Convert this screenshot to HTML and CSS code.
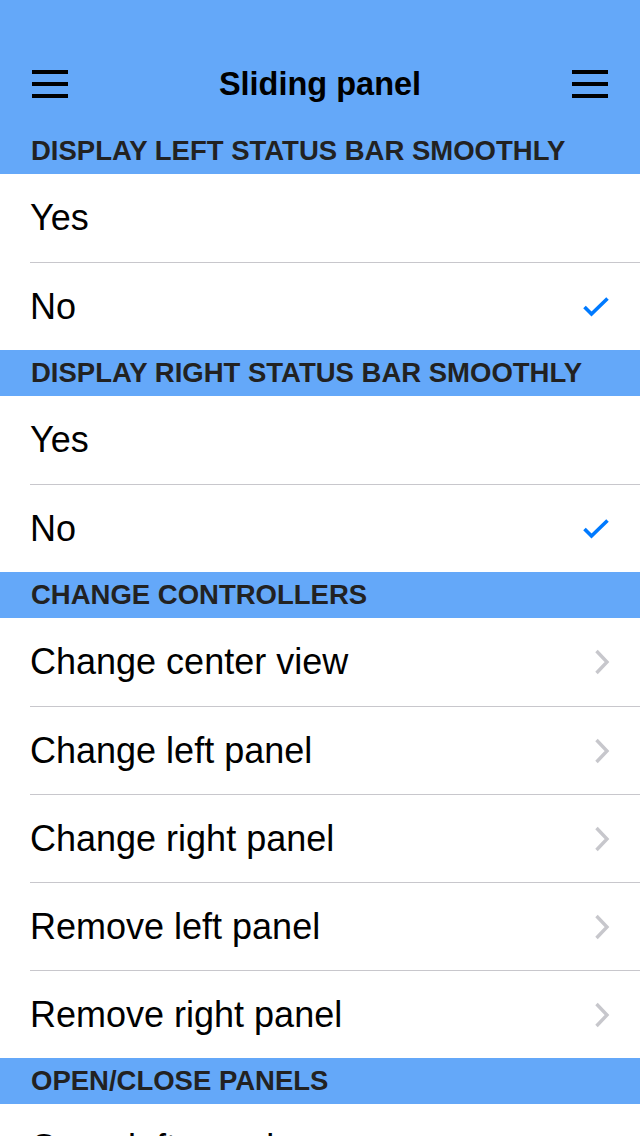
FILE: index.html
```html
<!DOCTYPE html>
<html>
<head>
<meta charset="utf-8">
<link rel="stylesheet" href="styles.css">
</head>
<body>
<div class="app">
  <header class="topbar">
    <div class="status"></div>
    <nav class="nav">
      <span class="burger"><i></i><i></i><i></i></span>
      <h1 class="title">Sliding panel</h1>
      <span class="burger"><i></i><i></i><i></i></span>
    </nav>
  </header>

  <div class="section">DISPLAY LEFT STATUS BAR SMOOTHLY</div>
  <ul class="list">
    <li class="row"><span class="label">Yes</span></li>
    <li class="row"><span class="label">No</span>
      <svg class="check" width="28" height="22" viewBox="0 0 28 22"><path d="M2.5 11 L9.5 18 L25.5 2.5" fill="none" stroke="#007aff" stroke-width="3.6" stroke-linecap="butt" stroke-linejoin="miter"/></svg>
    </li>
  </ul>

  <div class="section">DISPLAY RIGHT STATUS BAR SMOOTHLY</div>
  <ul class="list">
    <li class="row"><span class="label">Yes</span></li>
    <li class="row"><span class="label">No</span>
      <svg class="check" width="28" height="22" viewBox="0 0 28 22"><path d="M2.5 11 L9.5 18 L25.5 2.5" fill="none" stroke="#007aff" stroke-width="3.6" stroke-linecap="butt" stroke-linejoin="miter"/></svg>
    </li>
  </ul>

  <div class="section">CHANGE CONTROLLERS</div>
  <ul class="list">
    <li class="row"><span class="label">Change center view</span><svg class="chev" width="16" height="26" viewBox="0 0 16 26"><path d="M2.5 2 L13 13 L2.5 24" fill="none" stroke="#c7c7cc" stroke-width="3.4"/></svg></li>
    <li class="row"><span class="label">Change left panel</span><svg class="chev" width="16" height="26" viewBox="0 0 16 26"><path d="M2.5 2 L13 13 L2.5 24" fill="none" stroke="#c7c7cc" stroke-width="3.4"/></svg></li>
    <li class="row"><span class="label">Change right panel</span><svg class="chev" width="16" height="26" viewBox="0 0 16 26"><path d="M2.5 2 L13 13 L2.5 24" fill="none" stroke="#c7c7cc" stroke-width="3.4"/></svg></li>
    <li class="row"><span class="label">Remove left panel</span><svg class="chev" width="16" height="26" viewBox="0 0 16 26"><path d="M2.5 2 L13 13 L2.5 24" fill="none" stroke="#c7c7cc" stroke-width="3.4"/></svg></li>
    <li class="row"><span class="label">Remove right panel</span><svg class="chev" width="16" height="26" viewBox="0 0 16 26"><path d="M2.5 2 L13 13 L2.5 24" fill="none" stroke="#c7c7cc" stroke-width="3.4"/></svg></li>
  </ul>

  <div class="section">OPEN/CLOSE PANELS</div>
  <ul class="list">
    <li class="row"><span class="label">Open left panel</span></li>
  </ul>
</div>
</body>
</html>
```

FILE: styles.css
```css
* { box-sizing: border-box; }
html, body {
  margin: 0;
  padding: 0;
  background: #ffffff;
  font-family: "Liberation Sans", Arial, sans-serif;
  color: #000;
}
.app {
  width: 640px;
  height: 1136px;
  overflow: hidden;
}
.topbar {
  background: #64a8f9;
}
.status {
  height: 40px;
}
.nav {
  height: 88px;
  display: flex;
  align-items: center;
  justify-content: space-between;
  padding: 0 32px;
}
.title {
  margin: 0;
  font-size: 32.5px;
  font-weight: bold;
  line-height: 1;
  color: #000;
}
.burger {
  width: 36px;
  height: 28px;
  display: flex;
  flex-direction: column;
  justify-content: space-between;
}
.burger i {
  display: block;
  height: 4px;
  background: #000;
}
.section {
  background: #64a8f9;
  height: 46px;
  padding-left: 31px;
  display: flex;
  align-items: center;
  font-size: 27.5px;
  font-weight: bold;
  color: #222;
}
.list {
  list-style: none;
  margin: 0;
  padding: 0 0 0 30px;
}
.row {
  height: 88px;
  display: flex;
  align-items: center;
  justify-content: space-between;
  padding-right: 30px;
  border-top: 1px solid #c8c7cc;
}
.row:first-child {
  border-top: none;
}
.label {
  font-size: 36px;
}
```
